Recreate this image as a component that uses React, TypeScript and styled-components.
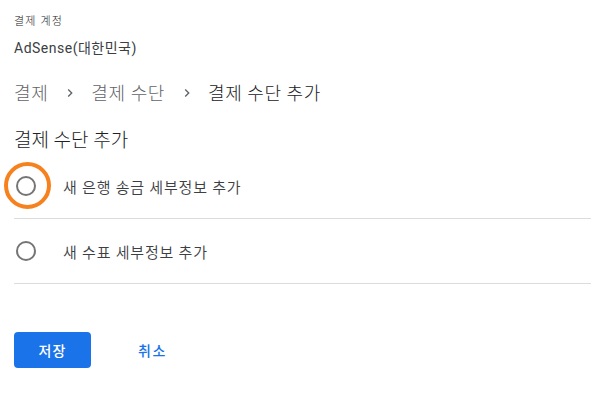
import styled, { createGlobalStyle } from 'styled-components';

const GlobalStyle = createGlobalStyle`
  html, body {
    margin: 0;
    padding: 0;
    background: #fff;
  }
  body {
    font-family: Roboto, "Noto Sans CJK KR", "Noto Sans", sans-serif;
    color: #202124;
  }
`;

const Page = styled.div`
  padding: 14px 10px 0 14px;
  width: 601px;
  box-sizing: border-box;
`;

const AccountLabel = styled.div`
  font-size: 11px;
  line-height: 16px;
  letter-spacing: 1.2px;
  font-weight: 300;
  color: #202124;
`;

const AccountName = styled.div`
  margin-top: 8px;
  font-size: 14px;
  line-height: 20px;
  letter-spacing: 0.5px;
  color: #3c4043;
`;

const Breadcrumb = styled.nav`
  display: flex;
  align-items: center;
  margin-top: 19px;
  height: 30px;
  font-size: 18px;
  font-weight: 300;
  letter-spacing: 0.6px;
`;

const Crumb = styled.span<{ $current?: boolean }>`
  color: ${p => (p.$current ? '#202124' : '#5f6368')};
`;

const Chevron = styled.svg`
  width: 16px;
  height: 16px;
  margin: 2px 13px 0 14px;
  fill: #5f6368;
`;

const Title = styled.h2`
  margin: 21px 0 0;
  font-size: 19px;
  font-weight: 300;
  line-height: 26px;
  color: #202124;
`;

const OptionList = styled.div`
  display: flex;
  flex-direction: column;
`;

const OptionRow = styled.label`
  position: relative;
  display: flex;
  align-items: center;
  height: 64px;
  border-bottom: 1px solid #dadce0;
  cursor: pointer;
`;

const Radio = styled.span`
  box-sizing: border-box;
  width: 20px;
  height: 20px;
  margin-left: 2px;
  border: 2px solid #757575;
  border-radius: 50%;
  flex-shrink: 0;
`;

const Highlight = styled.span`
  position: absolute;
  left: -10px;
  top: 8px;
  width: 47px;
  height: 47px;
  box-sizing: border-box;
  border: 4px solid #f6821f;
  border-radius: 50%;
  pointer-events: none;
`;

const OptionText = styled.span`
  margin-left: 27px;
  font-size: 15px;
  font-weight: 350;
  color: #3c4043;
  letter-spacing: 0.8px;
`;

const Actions = styled.div`
  display: flex;
  align-items: center;
  margin-top: 48px;
  gap: 47px;
`;

const SaveButton = styled.button`
  width: 77px;
  height: 36px;
  border: none;
  border-radius: 4px;
  background: #1a73e8;
  color: #fff;
  font-family: inherit;
  font-size: 14px;
  font-weight: 500;
  letter-spacing: 1px;
`;

const CancelButton = styled.button`
  border: none;
  background: none;
  padding: 0;
  color: #1a73e8;
  font-family: inherit;
  font-size: 14px;
  font-weight: 500;
  letter-spacing: 1.5px;
`;

function ChevronIcon() {
  return (
    <Chevron viewBox="0 0 24 24">
      <path d="M8.6 16.6 13.2 12 8.6 7.4 10 6l6 6-6 6z" />
    </Chevron>
  );
}

const options = [
  { label: '새 은행 송금 세부정보 추가', highlighted: true },
  { label: '새 수표 세부정보 추가', highlighted: false },
];

export default function App() {
  return (
    <>
      <GlobalStyle />
      <Page>
        <AccountLabel>결제 계정</AccountLabel>
        <AccountName>AdSense(대한민국)</AccountName>

        <Breadcrumb>
          <Crumb>결제</Crumb>
          <ChevronIcon />
          <Crumb>결제 수단</Crumb>
          <ChevronIcon />
          <Crumb $current>결제 수단 추가</Crumb>
        </Breadcrumb>

        <Title>결제 수단 추가</Title>

        <OptionList>
          {options.map(o => (
            <OptionRow key={o.label}>
              <Radio />
              {o.highlighted && <Highlight />}
              <OptionText>{o.label}</OptionText>
            </OptionRow>
          ))}
        </OptionList>

        <Actions>
          <SaveButton>저장</SaveButton>
          <CancelButton>취소</CancelButton>
        </Actions>
      </Page>
    </>
  );
}
